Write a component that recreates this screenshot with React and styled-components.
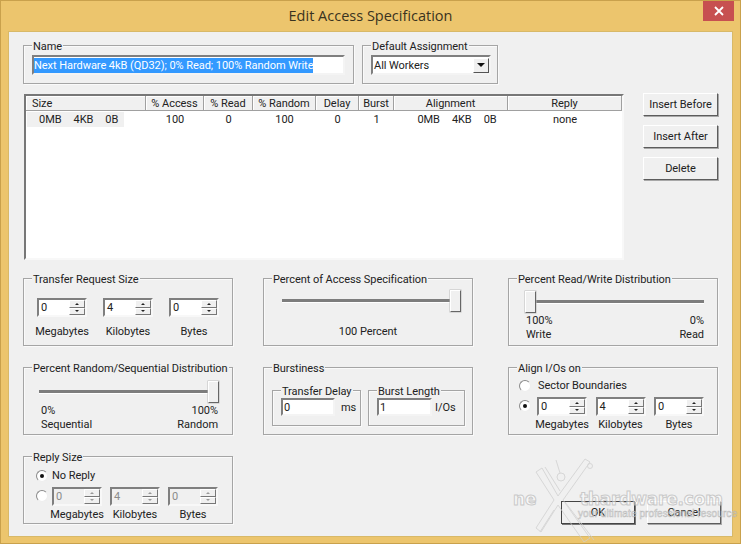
import styled, { createGlobalStyle } from "styled-components";

const GlobalStyle = createGlobalStyle`
  html, body {
    margin: 0;
    padding: 0;
    background: #ecc56d;
  }
  * { box-sizing: border-box; }
`;

const Frame = styled.div`
  position: relative;
  width: 741px;
  height: 544px;
  overflow: hidden;
  display: flex;
  flex-direction: column;
  background: #ecc56d;
  box-shadow: inset 0 0 0 1px #c9a14c;
  font-family: Roboto, "Liberation Sans", sans-serif;
  font-size: 11px;
  letter-spacing: -0.05px;
  color: #222;
`;

const TitleBar = styled.div`
  position: relative;
  height: 31px;
  flex: none;
  display: flex;
  align-items: center;
  justify-content: center;
  padding-bottom: 1px;
  font-family: "Open Sans", "Noto Sans", sans-serif;
  font-size: 14.5px;
  letter-spacing: 0;
  color: #3a3320;
`;

const CloseButton = styled.div`
  position: absolute;
  top: 1px;
  right: 7px;
  width: 31px;
  height: 20px;
  background: #c75050;
  color: #fff;
  display: flex;
  align-items: center;
  justify-content: center;
`;

const Client = styled.div`
  flex: 1;
  margin: 0 8px 7px;
  padding: 13px 14px 0;
  background: #f0f0f0;
  border: 1px solid #d8b968;
  display: flex;
  flex-direction: column;
`;

const TopRow = styled.div`
  display: flex;
  gap: 8px;
`;

const ListRow = styled.div`
  display: flex;
  gap: 19px;
  margin: 10px 0 18px;
  align-items: flex-start;
`;

const PanelGrid = styled.div`
  display: grid;
  grid-template-columns: 240px 245px 210px;
  grid-auto-rows: 68px;
  row-gap: 21px;
`;

const Group = styled.div`
  position: relative;
  width: ${(p) => p.$w || 210}px;
  height: ${(p) => p.$h || 68}px;
  border: 1px solid #a5a5a5;
  box-shadow: inset 1px 1px 0 #fafafa, 1px 1px 0 #fafafa;
  padding: ${(p) => p.$pad || "0"};
`;

const Legend = styled.div`
  position: absolute;
  top: -6px;
  left: 8px;
  padding: 0 1px;
  line-height: 13px;
  background: #f0f0f0;
  white-space: nowrap;
`;

const Selected = styled.span`
  background: #3399ff;
  color: #fff;
  display: inline-block;
  height: 15px;
  line-height: 15px;
  white-space: nowrap;
`;

const Sunken = styled.div`
  display: flex;
  align-items: center;
  width: ${(p) => p.$w}px;
  height: ${(p) => p.$h || 19}px;
  background: #fff;
  border: 2px solid;
  border-color: #7f7f7f #f4f4f4 #f4f4f4 #7f7f7f;
  padding-left: ${(p) => p.$inset ?? 1}px;
  flex: none;
`;

const ComboArrow = styled.div`
  width: 16px;
  height: 15px;
  margin-left: auto;
  background: #f0f0f0;
  border: 1px solid;
  border-color: #fff #555 #555 #fff;
  display: flex;
  align-items: center;
  justify-content: center;

  &::after {
    content: "";
    border-left: 4px solid transparent;
    border-right: 4px solid transparent;
    border-top: 4px solid #111;
  }
`;

const List = styled.div`
  width: 600px;
  height: 166px;
  margin-left: 1px;
  background: #fff;
  border: 2px solid;
  border-color: #777 #f8f8f8 #f8f8f8 #777;
`;

const COLUMNS = "120px 58px 49px 63px 43px 35px 114px 114px";

const ListHead = styled.div`
  display: grid;
  grid-template-columns: ${COLUMNS};
  height: 15px;
`;

const HeadCell = styled.div`
  background: #f0f0f0;
  border-right: 1px solid #a0a0a0;
  border-bottom: 1px solid #a0a0a0;
  box-shadow: inset 1px 1px 0 #fff;
  line-height: 16px;
  padding-left: ${(p) => (p.$left ? "6px" : "0")};
  text-align: ${(p) => (p.$left ? "left" : "center")};
  overflow: hidden;
  white-space: nowrap;
`;

const ListItem = styled.div`
  display: grid;
  grid-template-columns: ${COLUMNS};
  height: 15px;
  margin-top: 1px;
  line-height: 15px;
`;

const Cell = styled.div`
  text-align: center;
`;

const SizeText = styled.div`
  display: flex;
  justify-content: ${(p) => (p.$first ? "flex-start" : "center")};
  gap: 12px;
  ${(p) =>
    p.$first
      ? `
    background: #f0f0f0;
    margin: 0 22px 0 1px;
    padding-left: 12px;
  `
      : "padding-left: 12px;"}
`;

const SideButtons = styled.div`
  display: flex;
  flex-direction: column;
  gap: 9px;
  margin-top: -1px;
`;

const Button = styled.div`
  width: ${(p) => p.$w || 75}px;
  height: ${(p) => p.$h || 23}px;
  display: flex;
  align-items: center;
  justify-content: center;
  background: #f0f0f0;
  border: 1px solid;
  border-color: ${(p) =>
    p.$default ? "#444" : "#fff #5c5c5c #5c5c5c #fff"};
  box-shadow: 1px 1px 0 ${(p) => (p.$default ? "#777" : "#a8a8a8")};
`;

const SpinRow = styled.div`
  display: flex;
  gap: ${(p) => p.$gap || 16}px;
  padding: ${(p) => p.$pad};
`;

const SpinColumn = styled.div`
  width: 50px;
  display: flex;
  flex-direction: column;
  align-items: center;
`;

const SpinBox = styled.div`
  width: 50px;
  height: 19px;
  display: flex;
  align-items: center;
  background: ${(p) => (p.$off ? "#f0f0f0" : "#fff")};
  color: ${(p) => (p.$off ? "#8b8b8b" : "#222")};
  border: 2px solid;
  border-color: #7f7f7f #f8f8f8 #f8f8f8 #7f7f7f;
  padding-left: 2px;
`;

const SpinButtons = styled.div`
  margin-left: auto;
  width: 16px;
  height: 15px;
  display: flex;
  flex-direction: column;
`;

const SpinPart = styled.div`
  flex: 1;
  background: #f0f0f0;
  border: 1px solid;
  border-color: #fff #777 #777 #fff;
  display: flex;
  align-items: center;
  justify-content: center;

  &::after {
    content: "";
    border-left: 2px solid transparent;
    border-right: 2px solid transparent;
    ${(p) =>
      p.$down
        ? `border-top: 2px solid ${p.$off ? "#999" : "#222"};`
        : `border-bottom: 2px solid ${p.$off ? "#999" : "#222"};`}
  }
`;

const SpinLabel = styled.div`
  margin-top: ${(p) => p.$top ?? 8}px;
  line-height: 13px;
  white-space: nowrap;
`;

const SliderTrack = styled.div`
  position: relative;
  height: 22px;
  margin: ${(p) => p.$margin};
  display: flex;
  align-items: center;

  &::before {
    content: "";
    flex: 1;
    height: 3px;
    background: #7d7d7d;
    border-bottom: 1px solid #fff;
  }
`;

const SliderThumb = styled.div`
  position: absolute;
  top: 0;
  ${(p) => (p.$start ? "left: 0;" : "right: 0;")}
  width: 11px;
  height: 22px;
  background: #f0f0f0;
  border: 1px solid;
  border-color: #fff #666 #666 #fff;
  box-shadow: 0 0 0 0.5px #bbb;
`;

const SliderLabels = styled.div`
  display: flex;
  justify-content: space-between;
  line-height: 14px;
  padding: ${(p) => p.$pad};
`;

const RightText = styled.div`
  text-align: right;
`;

const CenterLabel = styled.div`
  text-align: center;
  margin-top: 13px;
  line-height: 14px;
`;

const InnerGroups = styled.div`
  display: flex;
  gap: 7px;
  padding: 22px 0 0 8px;
`;

const FieldRow = styled.div`
  display: flex;
  align-items: center;
  gap: ${(p) => p.$gap}px;
  padding: 7px 0 0 8px;
`;

const RadioLine = styled.div`
  display: flex;
  align-items: center;
  gap: ${(p) => p.$gap}px;
  height: 13px;
  margin: ${(p) => p.$margin};
  line-height: 13px;
`;

const Radio = styled.div`
  width: 12px;
  height: 12px;
  flex: none;
  border-radius: 50%;
  background: #fff;
  border: 1px solid;
  border-color: #8a8a8a #eee #eee #8a8a8a;
  display: flex;
  align-items: center;
  justify-content: center;

  &::after {
    content: "";
    width: 4px;
    height: 4px;
    border-radius: 50%;
    background: ${(p) => (p.$on ? "#111" : "transparent")};
  }
`;

const RadioSpins = styled.div`
  display: flex;
  align-items: flex-start;
  gap: ${(p) => p.$gap}px;
  margin: ${(p) => p.$margin};
`;

const RadioSlot = styled.div`
  padding-top: 3px;
`;

const Footer = styled.div`
  grid-column: 2 / 4;
  display: flex;
  justify-content: flex-end;
  align-items: flex-end;
  gap: 12px;
  margin-right: -3px;
`;

const Watermark = styled.div`
  position: absolute;
  left: 511px;
  top: 458px;
  width: 230px;
  height: 84px;
  pointer-events: none;
  opacity: 0.75;
`;

const WaterLogo = styled.svg`
  position: absolute;
  left: 21px;
  top: 0;
`;

const WaterText = styled.div`
  position: absolute;
  top: 31px;
  left: ${(p) => p.$left}px;
  font-family: "DejaVu Sans", sans-serif;
  font-weight: bold;
  font-size: 17px;
  letter-spacing: -0.2px;
  line-height: 20px;
  color: rgba(255, 255, 255, 0.7);
  -webkit-text-stroke: 1px #bdbdbd;
  white-space: nowrap;
`;

const WaterSlogan = styled.div`
  position: absolute;
  top: 50px;
  left: 67px;
  font-family: "Liberation Sans", sans-serif;
  font-size: 10px;
  letter-spacing: 0.1px;
  color: #f4f4f4;
  -webkit-text-stroke: 0.5px #a9a9a9;
  white-space: nowrap;
`;

const SpinField = ({ value, label, off, top }) => (
  <SpinColumn>
    <SpinBox $off={off}>
      {value}
      <SpinButtons>
        <SpinPart $off={off} />
        <SpinPart $off={off} $down />
      </SpinButtons>
    </SpinBox>
    <SpinLabel $top={top}>{label}</SpinLabel>
  </SpinColumn>
);

const SizeParts = ({ first }) => (
  <SizeText $first={first}>
    <span>0MB</span>
    <span>4KB</span>
    <span>0B</span>
  </SizeText>
);

const App = () => {
  return (
    <>
      <GlobalStyle />
      <Frame>
        <TitleBar>
          Edit Access Specification
          <CloseButton>
            <svg width="10" height="10" viewBox="0 0 10 10">
              <path d="M1 1L9 9M9 1L1 9" stroke="#fff" strokeWidth="1.8" />
            </svg>
          </CloseButton>
        </TitleBar>
        <Client>
          <TopRow>
            <Group $w={331} $h={39} $pad="9px 0 0 8px">
              <Legend>Name</Legend>
              <Sunken $w={313} $h={20} $inset={0}>
                <Selected>Next Hardware 4kB (QD32); 0% Read; 100% Random Write</Selected>
              </Sunken>
            </Group>
            <Group $w={136} $h={39} $pad="9px 0 0 8px">
              <Legend>Default Assignment</Legend>
              <Sunken $w={120} $h={20}>
                All Workers
                <ComboArrow />
              </Sunken>
            </Group>
          </TopRow>

          <ListRow>
            <List>
              <ListHead>
                <HeadCell $left>Size</HeadCell>
                <HeadCell>% Access</HeadCell>
                <HeadCell>% Read</HeadCell>
                <HeadCell>% Random</HeadCell>
                <HeadCell>Delay</HeadCell>
                <HeadCell>Burst</HeadCell>
                <HeadCell>Alignment</HeadCell>
                <HeadCell>Reply</HeadCell>
              </ListHead>
              <ListItem>
                <SizeParts first />
                <Cell>100</Cell>
                <Cell>0</Cell>
                <Cell>100</Cell>
                <Cell>0</Cell>
                <Cell>1</Cell>
                <SizeParts />
                <Cell>none</Cell>
              </ListItem>
            </List>
            <SideButtons>
              <Button>Insert Before</Button>
              <Button>Insert After</Button>
              <Button>Delete</Button>
            </SideButtons>
          </ListRow>

          <PanelGrid>
            <Group>
              <Legend>Transfer Request Size</Legend>
              <SpinRow $pad="19px 0 0 13px">
                <SpinField value="0" label="Megabytes" />
                <SpinField value="4" label="Kilobytes" />
                <SpinField value="0" label="Bytes" />
              </SpinRow>
            </Group>
            <Group>
              <Legend>Percent of Access Specification</Legend>
              <SliderTrack $margin="11px 11px 0 18px">
                <SliderThumb />
              </SliderTrack>
              <CenterLabel>100 Percent</CenterLabel>
            </Group>
            <Group>
              <Legend>Percent Read/Write Distribution</Legend>
              <SliderTrack $margin="12px 13px 1px 16px">
                <SliderThumb $start />
              </SliderTrack>
              <SliderLabels $pad="0 13px 0 17px">
                <div>
                  100%
                  <br />
                  Write
                </div>
                <RightText>
                  0%
                  <br />
                  Read
                </RightText>
              </SliderLabels>
            </Group>

            <Group>
              <Legend>Percent Random/Sequential Distribution</Legend>
              <SliderTrack $margin="13px 13px 1px 15px">
                <SliderThumb />
              </SliderTrack>
              <SliderLabels $pad="0 14px 0 17px">
                <div>
                  0%
                  <br />
                  Sequential
                </div>
                <RightText>
                  100%
                  <br />
                  Random
                </RightText>
              </SliderLabels>
            </Group>
            <Group>
              <Legend>Burstiness</Legend>
              <InnerGroups>
                <Group $w={89} $h={36}>
                  <Legend>Transfer Delay</Legend>
                  <FieldRow $gap={6}>
                    <Sunken $w={54} $h={18}>0</Sunken>
                    ms
                  </FieldRow>
                </Group>
                <Group $w={97} $h={36}>
                  <Legend>Burst Length</Legend>
                  <FieldRow $gap={3}>
                    <Sunken $w={55} $h={18}>1</Sunken>
                    I/Os
                  </FieldRow>
                </Group>
              </InnerGroups>
            </Group>
            <Group>
              <Legend>Align I/Os on</Legend>
              <RadioLine $margin="11px 0 0 10px" $gap={7}>
                <Radio />
                Sector Boundaries
              </RadioLine>
              <RadioSpins $margin="5px 0 0 10px" $gap={6}>
                <RadioSlot>
                  <Radio $on />
                </RadioSlot>
                <SpinRow $gap={8.5}>
                  <SpinField value="0" label="Megabytes" top={2} />
                  <SpinField value="4" label="Kilobytes" top={2} />
                  <SpinField value="0" label="Bytes" top={2} />
                </SpinRow>
              </RadioSpins>
            </Group>

            <Group>
              <Legend>Reply Size</Legend>
              <RadioLine $margin="12px 0 0 12px" $gap={4}>
                <Radio $on />
                No Reply
              </RadioLine>
              <RadioSpins $margin="5px 0 0 12px" $gap={4}>
                <RadioSlot>
                  <Radio />
                </RadioSlot>
                <SpinRow $gap={8}>
                  <SpinField value="0" label="Megabytes" off top={2} />
                  <SpinField value="4" label="Kilobytes" off top={2} />
                  <SpinField value="0" label="Bytes" off top={2} />
                </SpinRow>
              </RadioSpins>
            </Group>
            <Footer>
              <Button $default $w={74}>OK</Button>
              <Button $w={74}>Cancel</Button>
            </Footer>
          </PanelGrid>
        </Client>

        <Watermark>
          <WaterLogo width="70" height="84" viewBox="0 0 70 84" fill="none" stroke="#cfcfcf" strokeWidth="1">
            <path d="M4 14L22 42L4 70L9 74L26 47L52 84L58 80L31 42L58 4L53 1L26 38L10 10Z" />
            <path d="M13 9L28 33M33 44L62 82M22 52L8 74" />
            <circle cx="29" cy="19" r="4" />
            <path d="M24 2L28 15" />
            <circle cx="58" cy="8" r="2.5" />
          </WaterLogo>
          <WaterText $left={2}>ne</WaterText>
          <WaterText $left={69}>thardware.com</WaterText>
          <WaterSlogan>your ultimate professional resource</WaterSlogan>
        </Watermark>
      </Frame>
    </>
  );
};

export default App;
